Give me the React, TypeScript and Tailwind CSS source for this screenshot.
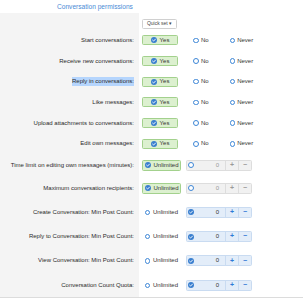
import React from "react";

const FONT = { fontFamily: '"Liberation Sans", Arial, sans-serif' };

function CheckDot() {
  return (
    <svg width="6" height="6" viewBox="0 0 12 12" className="shrink-0">
      <circle cx="6" cy="6" r="6" fill="#3a7fcf" />
      <path d="M3.2 6.2 L5.2 8.1 L8.9 4.2" fill="none" stroke="#fff" strokeWidth="1.8" strokeLinecap="round" strokeLinejoin="round" />
    </svg>
  );
}

function Ring() {
  return <span className="inline-block h-[5.5px] w-[5.5px] shrink-0 rounded-full border border-[#3d86d6] bg-white" />;
}

function YesNoNever() {
  return (
    <div className="flex items-center">
      <div className="flex h-[10px] w-[36px] items-center justify-center gap-[3px] rounded-[1.5px] border border-[#a3d18d] bg-[#dcf0cf] text-[6px] text-[#333]">
        <CheckDot />
        <span>Yes</span>
      </div>
      <div className="ml-[15px] flex items-center gap-[2.5px] text-[6px] text-[#333]">
        <Ring />
        <span>No</span>
      </div>
      <div className="ml-[21px] flex items-center gap-[2px] text-[6px] text-[#333]">
        <Ring />
        <span>Never</span>
      </div>
    </div>
  );
}

function Counter({ enabled }: { enabled: boolean }) {
  const box = enabled ? "border-[#c9dbf1] bg-[#e3edf9]" : "border-[#dddddd] bg-[#f1f1f1]";
  const btn = enabled ? "text-[#2f7ad6]" : "text-[#9a9a9a]";
  const div = enabled ? "border-[#c9dbf1]" : "border-[#dddddd]";
  return (
    <div className={`ml-[5px] flex h-[11px] w-[66px] items-stretch rounded-[1.5px] border ${box}`}>
      <div className="flex flex-1 items-center justify-between pl-[1px] pr-[6px]">
        {enabled ? <CheckDot /> : <Ring />}
        <span className={`text-[6px] ${enabled ? "text-[#333]" : "text-[#999]"}`}>0</span>
      </div>
      <div className={`flex w-[13px] items-center justify-center border-l text-[7px] font-bold ${div} ${btn}`}>+</div>
      <div className={`flex w-[13px] items-center justify-center border-l text-[7px] font-bold ${div} ${btn}`}>−</div>
    </div>
  );
}

function Unlimited({ selected }: { selected: boolean }) {
  return (
    <div
      className={`flex h-[11px] w-[39px] items-center gap-[3px] rounded-[1.5px] border pl-[1.5px] text-[6px] text-[#333] ${
        selected ? "border-[#a3d18d] bg-[#dcf0cf]" : "border-transparent"
      }`}
    >
      {selected ? <CheckDot /> : <Ring />}
      <span>Unlimited</span>
    </div>
  );
}

type Row = { label: string; kind: "yes" | "unl" | "num"; highlight?: boolean };

const yesRows: Row[] = [
  { label: "Start conversations:", kind: "yes" },
  { label: "Receive new conversations:", kind: "yes" },
  { label: "Reply in conversations:", kind: "yes", highlight: true },
  { label: "Like messages:", kind: "yes" },
  { label: "Upload attachments to conversations:", kind: "yes" },
  { label: "Edit own messages:", kind: "yes" },
];

const numRows: Row[] = [
  { label: "Maximum conversation recipients:", kind: "unl" },
  { label: "Create Conversation: Min Post Count:", kind: "num" },
  { label: "Reply to Conversation: Min Post Count:", kind: "num" },
  { label: "View Conversation: Min Post Count:", kind: "num" },
  { label: "Conversation Count Quota:", kind: "num" },
];

function Label({ text, highlight }: { text: string; highlight?: boolean }) {
  return (
    <div className="flex w-[139px] shrink-0 items-center justify-end self-stretch bg-[#f4f4f4] pr-[5px]">
      <span className={`text-[6px] text-[#2a2a2a] ${highlight ? "bg-[#b5d5fd]" : ""}`}>{text}</span>
    </div>
  );
}

function Controls({ kind }: { kind: Row["kind"] }) {
  if (kind === "yes") return <YesNoNever />;
  return (
    <div className="flex items-center">
      <Unlimited selected={kind === "unl"} />
      <Counter enabled={kind === "num"} />
    </div>
  );
}

export default function App() {
  return (
    <div className="h-[300px] w-[303px] overflow-hidden bg-white" style={FONT}>
      {/* Tab title */}
      <div className="flex h-[13px] items-center pl-[57px]">
        <span className="text-[6.6px] text-[#4a8bd6]">Conversation permissions</span>
      </div>

      <div className="border-b border-[#dcdcdc]">
        {/* Quick set */}
        <div className="flex h-[17px]">
          <div className="w-[139px] shrink-0 bg-[#f4f4f4]" />
          <div className="pl-[3px] pt-[6px]">
            <div className="flex h-[10px] w-[35px] items-center justify-center rounded-[1.5px] border border-[#d0d0d0] bg-white text-[5px] text-[#444]">
              Quick set ▾
            </div>
          </div>
        </div>

        {yesRows.map((r) => (
          <div key={r.label} className="flex h-[20.7px] items-center">
            <Label text={r.label} highlight={r.highlight} />
            <div className="pl-[3px]">
              <Controls kind={r.kind} />
            </div>
          </div>
        ))}

        <div className="flex h-[21.8px] items-center">
          <Label text="Time limit on editing own messages (minutes):" />
          <div className="pl-[3px]">
            <Controls kind="unl" />
          </div>
        </div>

        {numRows.map((r) => (
          <div key={r.label} className="flex h-[24.3px] items-center">
            <Label text={r.label} />
            <div className="pl-[3px]">
              <Controls kind={r.kind} />
            </div>
          </div>
        ))}
      </div>
    </div>
  );
}
